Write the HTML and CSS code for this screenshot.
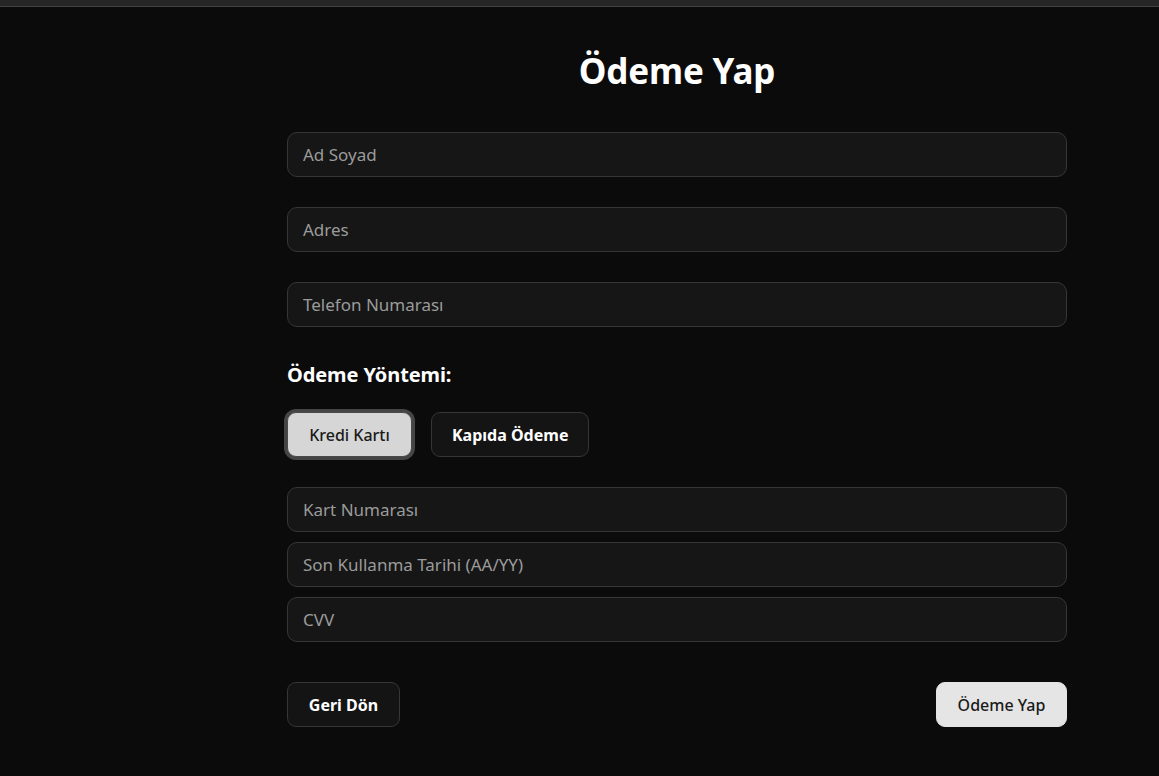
FILE: index.html
```html
<!DOCTYPE html>
<html lang="tr">
<head>
<meta charset="utf-8">
<title>Ödeme Yap</title>
<link rel="stylesheet" href="styles.css">
</head>
<body>
<div class="topbar"></div>
<main class="page">
  <h1 class="title">Ödeme Yap</h1>
  <form class="form">
    <div class="fields">
      <input class="field" type="text" placeholder="Ad Soyad">
      <input class="field" type="text" placeholder="Adres">
      <input class="field" type="text" placeholder="Telefon Numarası">
    </div>
    <h2 class="section">Ödeme Yöntemi:</h2>
    <div class="methods">
      <button type="button" class="method active">Kredi Kartı</button>
      <button type="button" class="method">Kapıda Ödeme</button>
    </div>
    <div class="card-fields">
      <input class="field" type="text" placeholder="Kart Numarası">
      <input class="field" type="text" placeholder="Son Kullanma Tarihi (AA/YY)">
      <input class="field" type="text" placeholder="CVV">
    </div>
    <div class="actions">
      <button type="button" class="btn back">Geri Dön</button>
      <button type="button" class="btn pay">Ödeme Yap</button>
    </div>
  </form>
</main>
</body>
</html>
```

FILE: styles.css
```css
* { box-sizing: border-box; }
html, body { margin: 0; padding: 0; }
body {
  background: #0b0b0b;
  color: #fff;
  font-family: "Noto Sans", "Open Sans", sans-serif;
  height: 776px;
  overflow: hidden;
}
.topbar {
  height: 7px;
  background: #262626;
  border-bottom: 1px solid #424242;
}
.page {
  width: 780px;
  margin: 0 0 0 287px;
}
.title {
  margin: 36px 0 0;
  height: 56px;
  font-size: 35px;
  font-weight: 700;
  text-align: center;
  line-height: 56px;
  letter-spacing: -0.2px;
}
.form { margin-top: 33px; display: flex; flex-direction: column; }
.fields { display: flex; flex-direction: column; gap: 30px; }
.field {
  display: block;
  width: 100%;
  height: 45px;
  background: #161616;
  border: 1px solid #363636;
  border-radius: 10px;
  padding: 0 15px;
  font-family: inherit;
  font-size: 17px;
  color: #fff;
  outline: none;
}
.field::placeholder { color: #9b9b9b; }
.section {
  margin: 34px 0 0;
  font-size: 20px;
  font-weight: 700;
  line-height: 28px;
  height: 28px;
  letter-spacing: -0.1px;
}
.methods { display: flex; gap: 19px; margin-top: 23px; }
.method {
  height: 45px;
  padding: 0 20px;
  border-radius: 9px;
  font-family: inherit;
  font-size: 16px;
  font-weight: 700;
  background: #141414;
  color: #fff;
  border: 1px solid #363636;
  white-space: nowrap;
}
.method.active {
  width: 125px;
  padding: 0 8px;
  background: #d6d6d6;
  color: #1a1a1a;
  font-weight: 500;
  border: 1px solid #4a4a4a;
  box-shadow: 0 0 0 3px #454545;
}
.card-fields { display: flex; flex-direction: column; gap: 10px; margin-top: 30px; }
.actions {
  display: flex;
  justify-content: space-between;
  margin-top: 40px;
}
.btn {
  height: 45px;
  border-radius: 9px;
  font-family: inherit;
  font-size: 16px;
  padding: 0 10px;
  white-space: nowrap;
}
.back {
  width: 113px;
  background: #141414;
  color: #fff;
  font-weight: 700;
  border: 1px solid #363636;
}
.pay {
  width: 131px;
  background: #e5e5e5;
  color: #1a1a1a;
  font-weight: 500;
  border: 1px solid #e5e5e5;
}
```
